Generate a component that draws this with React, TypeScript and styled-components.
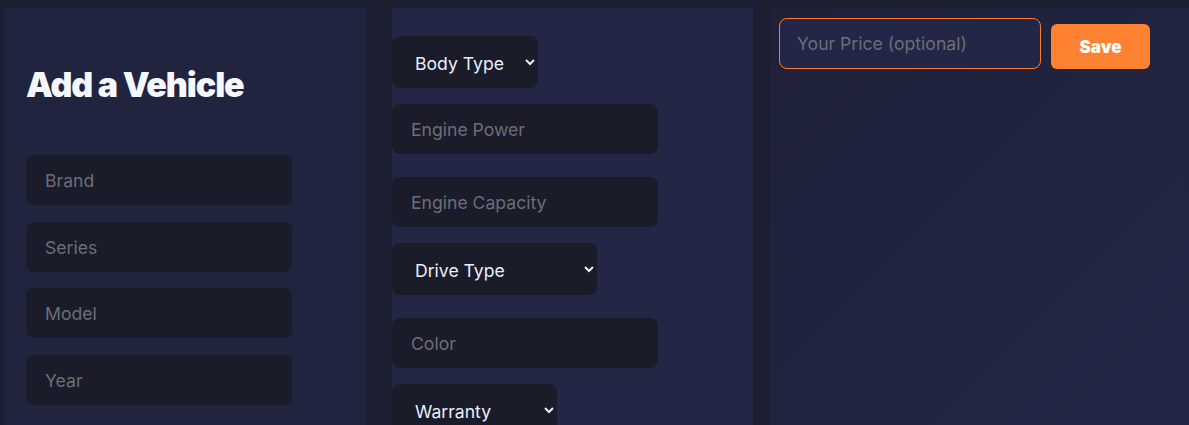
import React from "react";
import styled, { createGlobalStyle } from "styled-components";

const Global = createGlobalStyle`
  html, body { margin: 0; padding: 0; }
  body {
    background: #1c1f32;
    font-family: Inter, "Noto Sans", sans-serif;
    height: 425px;
    overflow: hidden;
  }
`;

const Layout = styled.div`
  display: flex;
  align-items: stretch;
  padding: 8px 0 0 4px;
  height: 417px;
`;

const Panel = styled.section<{ $w?: number; $ml?: number; $bg: string }>`
  box-sizing: border-box;
  width: ${(p) => (p.$w ? `${p.$w}px` : "auto")};
  flex: ${(p) => (p.$w ? "none" : "1")};
  margin-left: ${(p) => p.$ml ?? 0}px;
  background: ${(p) => p.$bg};
  display: flex;
  flex-direction: column;
  align-items: flex-start;
  overflow: hidden;
  & > * { flex-shrink: 0; }
`;

const LeftPanel = styled(Panel)`
  padding: 0 0 0 22px;
`;

const MiddlePanel = styled(Panel)`
  padding: 28px 0 0 0;
`;

const RightPanel = styled(Panel)`
  padding: 10px 0 0 9px;
`;

const Title = styled.h1`
  margin: 57px 0 50px 0;
  font-size: 34px;
  line-height: 40px;
  font-weight: 900;
  letter-spacing: -1.1px;
  color: #f4f7ff;
`;

const Stack = styled.div`
  display: flex;
  flex-direction: column;
  gap: 16.5px;
`;

const Field = styled.input<{ $mt?: number; $w?: number }>`
  box-sizing: border-box;
  flex-shrink: 0;
  width: ${(p) => p.$w ?? 266}px;
  height: 50px;
  margin-top: ${(p) => p.$mt ?? 0}px;
  padding: 1px 19px 0;
  border: none;
  border-radius: 8px;
  background: #1a1c2a;
  color: #e8edf8;
  font-family: Inter, "Noto Sans", sans-serif;
  font-size: 17.6px;
  outline: none;
  &::placeholder { color: #6c6e77; }
`;

const Select = styled.select<{ $mt?: number; $w: number }>`
  box-sizing: border-box;
  flex-shrink: 0;
  width: ${(p) => p.$w}px;
  height: 52px;
  margin-top: ${(p) => p.$mt ?? 0}px;
  padding: 2px 8px 0 19px;
  border: none;
  border-radius: 8px;
  background-color: #1a1c2a;
  color: #e8eefa;
  font-family: Inter, "Noto Sans", sans-serif;
  font-size: 17.6px;
  outline: none;
`;

const PriceRow = styled.div`
  display: flex;
  align-items: flex-end;
  gap: 10px;
`;

const PriceField = styled.input`
  box-sizing: border-box;
  width: 262px;
  height: 51px;
  padding: 0 17px;
  border: 1px solid #ff7c2e;
  border-radius: 8px;
  background: #232646;
  color: #e8edf8;
  font-family: Inter, "Noto Sans", sans-serif;
  font-size: 17.6px;
  outline: none;
  &::placeholder { color: #6c6e77; }
`;

const SaveButton = styled.button`
  width: 99px;
  height: 45px;
  border: none;
  border-radius: 6px;
  background: #ff8132;
  color: #ffffff;
  font-family: Inter, "Noto Sans", sans-serif;
  font-size: 17px;
  font-weight: 900;
  cursor: pointer;
`;

export default function App() {
  return (
    <>
      <Global />
      <Layout>
        <LeftPanel $w={362} $bg="#20243e">
          <Title>Add a Vehicle</Title>
          <Stack>
            <Field placeholder="Brand" />
            <Field placeholder="Series" />
            <Field placeholder="Model" />
            <Field placeholder="Year" />
          </Stack>
        </LeftPanel>
        <MiddlePanel $w={361} $ml={26} $bg="#232645">
          <Select $w={146} defaultValue="">
            <option value="">Body Type</option>
          </Select>
          <Field $mt={16} placeholder="Engine Power" />
          <Field $mt={23} placeholder="Engine Capacity" />
          <Select $mt={16} $w={205} defaultValue="">
            <option value="">Drive Type</option>
          </Select>
          <Field $mt={23} placeholder="Color" />
          <Select $mt={16} $w={165} defaultValue="">
            <option value="">Warranty</option>
          </Select>
        </MiddlePanel>
        <RightPanel $ml={17} $bg="linear-gradient(135deg, #1e2138 0%, #232746 100%)">
          <PriceRow>
            <PriceField placeholder="Your Price (optional)" />
            <SaveButton>Save</SaveButton>
          </PriceRow>
        </RightPanel>
      </Layout>
    </>
  );
}
